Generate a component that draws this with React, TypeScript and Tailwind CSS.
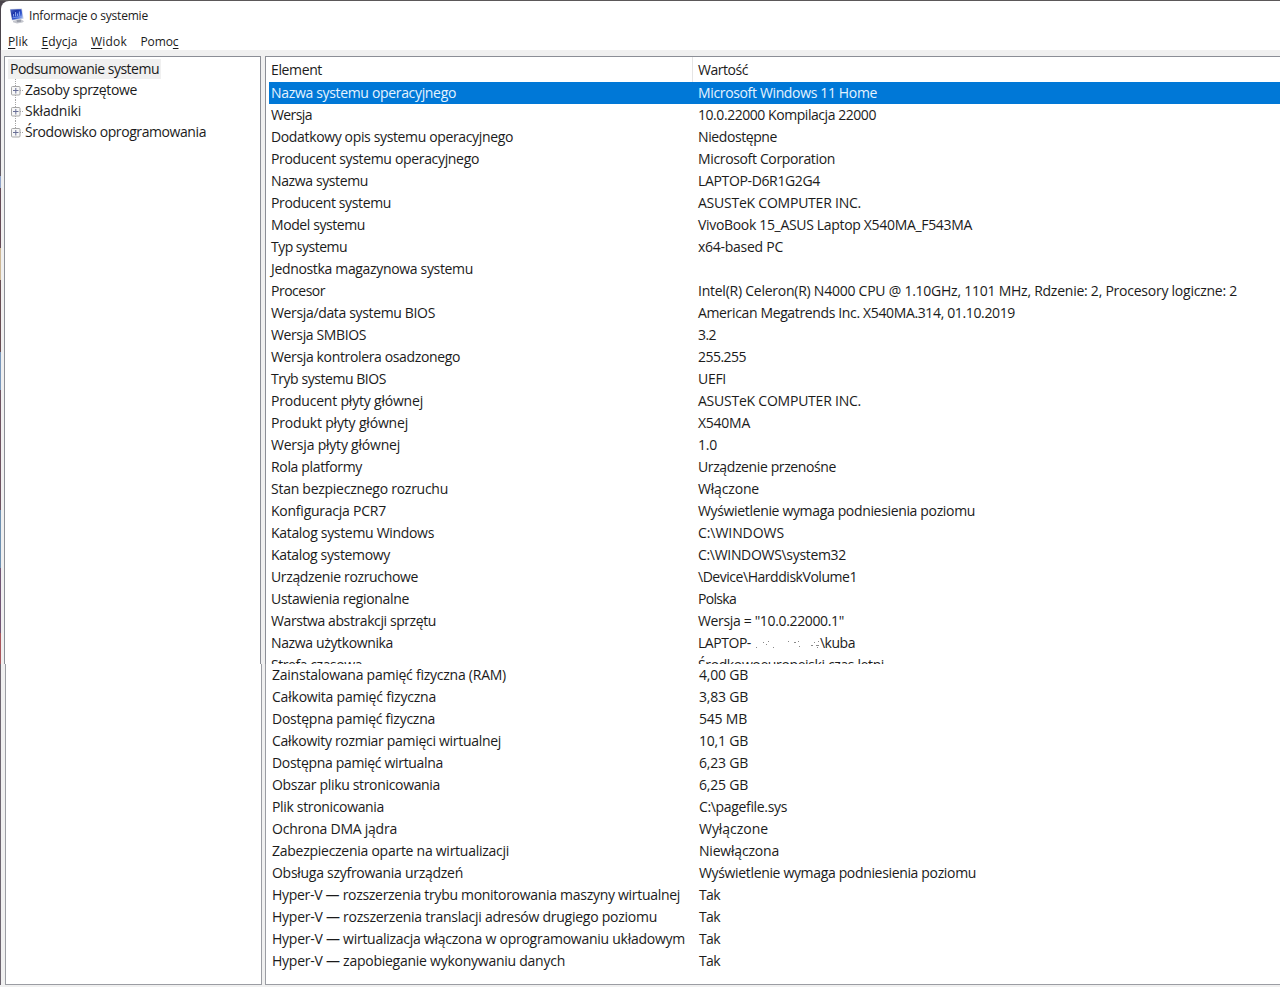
import { useId, useLayoutEffect, useRef, useState, type ReactNode } from "react";

// name, its width, value, its width (px)
type Row = [name: string, nameWidth: number, value: string, valueWidth: number];

const MENU = [
  { before: "", key: "P", after: "lik", width: 20 },
  { before: "", key: "E", after: "dycja", width: 36 },
  { before: "", key: "W", after: "idok", width: 36 },
  { before: "Pomo", key: "c", after: "", width: 38 },
];

const TREE: [label: string, width: number][] = [
  ["Zasoby sprzętowe", 112],
  ["Składniki", 56],
  ["Środowisko oprogramowania", 181],
];

const SYSTEM_ROWS: Row[] = [
  ["Nazwa systemu operacyjnego", 185, "Microsoft Windows 11 Home", 179],
  ["Wersja", 41, "10.0.22000 Kompilacja 22000", 178],
  ["Dodatkowy opis systemu operacyjnego", 242, "Niedostępne", 79],
  ["Producent systemu operacyjnego", 208, "Microsoft Corporation", 137],
  ["Nazwa systemu", 97, "LAPTOP-D6R1G2G4", 122],
  ["Producent systemu", 120, "ASUSTeK COMPUTER INC.", 163],
  ["Model systemu", 94, "VivoBook 15_ASUS Laptop X540MA_F543MA", 274],
  ["Typ systemu", 76, "x64-based PC", 85],
  ["Jednostka magazynowa systemu", 202, "", 0],
  ["Procesor", 54, "Intel(R) Celeron(R) N4000 CPU @ 1.10GHz, 1101 MHz, Rdzenie: 2, Procesory logiczne: 2", 539],
  ["Wersja/data systemu BIOS", 164, "American Megatrends Inc. X540MA.314, 01.10.2019", 317],
  ["Wersja SMBIOS", 95, "3.2", 18],
  ["Wersja kontrolera osadzonego", 189, "255.255", 48],
  ["Tryb systemu BIOS", 115, "UEFI", 28],
  ["Producent płyty głównej", 152, "ASUSTeK COMPUTER INC.", 163],
  ["Produkt płyty głównej", 137, "X540MA", 52],
  ["Wersja płyty głównej", 129, "1.0", 19],
  ["Rola platformy", 91, "Urządzenie przenośne", 138],
  ["Stan bezpiecznego rozruchu", 177, "Włączone", 61],
  ["Konfiguracja PCR7", 115, "Wyświetlenie wymaga podniesienia poziomu", 277],
  ["Katalog systemu Windows", 163, "C:\\WINDOWS", 86],
  ["Katalog systemowy", 119, "C:\\WINDOWS\\system32", 148],
  ["Urządzenie rozruchowe", 147, "\\Device\\HarddiskVolume1", 159],
  ["Ustawienia regionalne", 138, "Polska", 38],
  ["Warstwa abstrakcji sprzętu", 165, "Wersja = \"10.0.22000.1\"", 146],
  ["Nazwa użytkownika", 122, "LAPTOP-|\\kuba", 157],
  ["Strefa czasowa", 91, "Środkowoeuropejski czas letni", 186],
];

const MEMORY_ROWS: Row[] = [
  ["Zainstalowana pamięć fizyczna (RAM)", 234, "4,00 GB", 49],
  ["Całkowita pamięć fizyczna", 164, "3,83 GB", 49],
  ["Dostępna pamięć fizyczna", 163, "545 MB", 48],
  ["Całkowity rozmiar pamięci wirtualnej", 229, "10,1 GB", 49],
  ["Dostępna pamięć wirtualna", 171, "6,23 GB", 49],
  ["Obszar pliku stronicowania", 168, "6,25 GB", 49],
  ["Plik stronicowania", 112, "C:\\pagefile.sys", 88],
  ["Ochrona DMA jądra", 125, "Wyłączone", 69],
  ["Zabezpieczenia oparte na wirtualizacji", 237, "Niewłączona", 80],
  ["Obsługa szyfrowania urządzeń", 191, "Wyświetlenie wymaga podniesienia poziomu", 277],
  ["Hyper-V — rozszerzenia trybu monitorowania maszyny wirtualnej", 408, "Tak", 21],
  ["Hyper-V — rozszerzenia translacji adresów drugiego poziomu", 385, "Tak", 21],
  ["Hyper-V — wirtualizacja włączona w oprogramowaniu układowym", 413, "Tak", 21],
  ["Hyper-V — zapobieganie wykonywaniu danych", 293, "Tak", 21],
];

// Tightens the letter spacing until the text takes up the given width
function Fit({ width, children }: { width: number; children: ReactNode }) {
  const ref = useRef<HTMLSpanElement>(null);
  const [spacing, setSpacing] = useState(0);

  useLayoutEffect(() => {
    const el = ref.current;
    const count = el?.textContent?.length ?? 0;
    if (!el || count === 0) return;
    el.style.letterSpacing = "0px";
    const next = (width - el.getBoundingClientRect().width) / count;
    el.style.letterSpacing = `${next}px`;
    setSpacing(next);
  }, [width]);

  return (
    <span ref={ref} className="inline-block whitespace-pre" style={{ letterSpacing: spacing }}>
      {children}
    </span>
  );
}

function SystemIcon() {
  const id = useId();
  return (
    <svg width="16" height="16" viewBox="0 0 16 16" className="shrink-0">
      <defs>
        <linearGradient id={id} x1="0" y1="0" x2="1" y2="0.9">
          <stop offset="0" stopColor="#5570c4" />
          <stop offset="0.35" stopColor="#1c35a8" />
          <stop offset="0.65" stopColor="#2f55cf" />
          <stop offset="1" stopColor="#b4c9f6" />
        </linearGradient>
      </defs>
      <path d="M4 12.8 12 11.2 15 13.3 13.5 14.6 8 15.4 4 14.3Z" fill="#c4c6cd" />
      <path d="M7.5 11.5h4.5v2.3L8 14.2Z" fill="#9a9ea9" />
      <path d="M.8 1 13 .5 14.6 10.8 2.8 12.6Z" fill="#cdd3e2" />
      <path d="M1.3 1.6 12.4 1.2 13.8 10.2 3.2 11.8Z" fill={`url(#${id})`} />
      <path d="M4.5 8.5V6M6.5 8.3V4M8.5 8V5.5M10.5 7.7V3.5" stroke="#9fb8f2" strokeWidth="0.8" />
      <path d="M3.5 9.8 13 8.4" stroke="#7f9de8" strokeWidth="0.8" />
    </svg>
  );
}

function ExpandBox({ last }: { last: boolean }) {
  return (
    <svg width="17" height="21" viewBox="0 0 17 21" className="shrink-0">
      <path d={last ? "M7.5 0v7" : "M7.5 0v7M7.5 16v5"} stroke="#a5a5a5" strokeDasharray="1 1" />
      <path d="M12 11.5h4" stroke="#a5a5a5" strokeDasharray="1 1" />
      <rect x="3.5" y="7.5" width="8.5" height="8.5" rx="1" fill="#f7f7f7" stroke="#a6a6a6" />
      <path d="M5 11.5h5.5M7.8 9v5.5" stroke="#6a7096" />
    </svg>
  );
}

// What is left of the machine name after it was rubbed out
function ErasedName() {
  return (
    <svg width="69" height="12" viewBox="0 0 69 12" className="inline-block">
      <path
        d="M5 9.5h1M12 4.5h1M17 3.5h1M15 6.5h1M22 9.5h1M37 3.5h1M43 4.5h2M47 3.5h1M48 8.5h1M60 7.5h2M63 4.5h1M65 7.5h3M66 9.5h1M67 3.5h1"
        stroke="#8a8a8a"
      />
    </svg>
  );
}

function Value({ text }: { text: string }) {
  const [start, end] = text.split("|");
  if (end === undefined) return <>{text}</>;
  return <>{start}<ErasedName />{end}</>;
}

function Rows({ rows, selected }: { rows: Row[]; selected?: number }) {
  return (
    <div className="pl-[3px]">
      {rows.map(([name, nameWidth, value, valueWidth], i) => (
        <div
          key={name}
          className={`flex h-[22px] items-center pl-0.5 ${
            i === selected ? "bg-[#0078d7] text-[#e4f3ff]" : ""
          }`}
        >
          <span className="w-[427px] shrink-0"><Fit width={nameWidth}>{name}</Fit></span>
          <Fit width={valueWidth}><Value text={value} /></Fit>
        </div>
      ))}
    </div>
  );
}

export default function App() {
  return (
    <div className="flex h-[987px] w-[1280px] flex-col overflow-hidden bg-[#f0f0f0] font-['Open_Sans','Noto_Sans',sans-serif] text-sm text-[#1b1b1b]">
      <div className="h-px shrink-0 bg-[#5b5859]" />

      {/* Title bar and menu */}
      <div className="shrink-0 bg-[#4a444b] pl-px">
        <header className="h-[49px] rounded-tl-lg bg-white text-xs">
          <div className="flex h-[30px] items-center gap-1 pl-2">
            <SystemIcon />
            <Fit width={119}>Informacje o systemie</Fit>
          </div>
          <nav className="flex h-[21px] items-center gap-[13.5px] pl-[7px]">
            {MENU.map(({ before, key, after, width }) => (
              <Fit key={key} width={width}>
                {before}<u className="underline-offset-2">{key}</u>{after}
              </Fit>
            ))}
          </nav>
        </header>
      </div>

      {/* Upper part of the window, with a sliver of the desktop along its left edge */}
      <div className="flex h-[614px] shrink-0 overflow-hidden">
        <div className="flex w-px shrink-0 flex-col">
          <div className="h-[126px] bg-[#625c66]" />
          <div className="h-3 bg-[#8fa3c8]" />
          <div className="h-[60px] bg-[#644a56]" />
          <div className="h-[32px] bg-[#cdb795]" />
          <div className="h-[72px] bg-[#674c53]" />
          <div className="h-[38px] bg-[#7796ba]" />
          <div className="h-[120px] bg-[#6d5260]" />
          <div className="h-[58px] bg-[#6d8fb0]" />
          <div className="h-[65px] bg-[#705574]" />
          <div className="flex-1 bg-[#a8555c]" />
        </div>
        <div className="flex flex-1 gap-1 pt-1.5 pl-[3px]">
          <aside className="w-[257px] shrink-0 border border-b-0 border-[#8b8e96] bg-white pt-0.5 pl-[3px]">
            <div className="inline-flex h-5 items-center bg-[#f0f0f0] px-0.5">
              <Fit width={149}>Podsumowanie systemu</Fit>
            </div>
            {TREE.map(([label, width], i) => (
              <div key={label} className="flex h-[21px] items-center">
                <ExpandBox last={i === TREE.length - 1} />
                <Fit width={width}>{label}</Fit>
              </div>
            ))}
          </aside>
          <main className="flex-1 border-t border-l border-[#8b8e96] bg-white">
            <div className="flex h-[25px] items-center pl-[5px]">
              <span className="flex h-full w-[422px] items-center border-r border-[#e5e5e5]">
                <Fit width={51}>Element</Fit>
              </span>
              <span className="pl-[5px]"><Fit width={50}>Wartość</Fit></span>
            </div>
            <Rows rows={SYSTEM_ROWS} selected={0} />
          </main>
        </div>
      </div>

      {/* Lower part, scrolled down to the memory and virtualization entries */}
      <div className="flex h-[321px] shrink-0 gap-[3px] border-l border-[#6d6570] pl-1">
        <aside className="w-[257px] shrink-0 border border-t-0 border-[#9b9da3] bg-white" />
        <main className="flex-1 border-b border-l border-[#9b9da3] bg-white pl-px">
          <Rows rows={MEMORY_ROWS} />
        </main>
      </div>
    </div>
  );
}
